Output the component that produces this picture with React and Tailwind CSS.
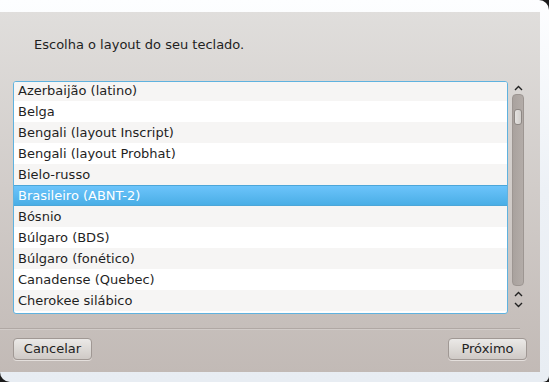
const layouts = [
  "Azerbaijão (latino)",
  "Belga",
  "Bengali (layout Inscript)",
  "Bengali (layout Probhat)",
  "Bielo-russo",
  "Brasileiro (ABNT-2)",
  "Bósnio",
  "Búlgaro (BDS)",
  "Búlgaro (fonético)",
  "Canadense (Quebec)",
  "Cherokee silábico",
];

function Arrow({ down }) {
  return (
    <svg width="9" height="6" viewBox="0 0 9 6" className="block">
      <path
        d={down ? "M1 1 L4.5 4.5 L8 1" : "M1 5 L4.5 1.5 L8 5"}
        fill="none"
        stroke="#222"
        strokeWidth="1.4"
      />
    </svg>
  );
}

export default function App() {
  const selected = "Brasileiro (ABNT-2)";

  return (
    <div
      className="w-[549px] h-[382px] bg-[#1c1c1c] overflow-hidden"
      style={{ fontFamily: '"DejaVu Sans", sans-serif' }}
    >
      <div className="w-full h-full rounded-tr-[10px] rounded-br-[6px] rounded-bl-[10px] bg-gradient-to-b from-[#fdfeff] via-[#edf1f6] to-[#e8edf3] pt-[12px] pr-[9px] pb-[10px]">
        <div className="w-full h-full bg-gradient-to-b from-[#e0dedc] to-[#c2bab6] flex flex-col text-[13px] text-[#1f1f1f]">
          <div className="pl-[34px] pt-[25px] h-[69px] leading-[16px]">Escolha o layout do seu teclado.</div>

          <div className="flex pl-[13px] pr-[14px]">
            <div className="w-[497px] h-[233px] border border-[#5fb2df] rounded-[3px] bg-white overflow-hidden">
              <div className="-mt-[2px]">
                {layouts.map((name, i) =>
                  name === selected ? (
                    <div
                      key={name}
                      className="h-[21px] leading-[19px] pl-[4px] text-white border-y border-[#4ca6d8] bg-gradient-to-b from-[#6cc4fb] to-[#49aee6]"
                    >
                      {name}
                    </div>
                  ) : (
                    <div
                      key={name}
                      className={`h-[21px] leading-[21px] pl-[4px] ${i % 2 === 0 ? "bg-[#f6f5f4]" : "bg-white"}`}
                    >
                      {name}
                    </div>
                  )
                )}
              </div>
            </div>

            <div className="w-[16px] ml-[2px] flex flex-col items-center pt-[4px]">
              <Arrow />
              <div className="mt-[3px] w-[12px] h-[192px] rounded-[4px] bg-gradient-to-r from-[#a9a29e] to-[#b3aca8] border border-[#9d9692] pt-[14px] px-[1px]">
                <div className="h-[16px] rounded-[3px] bg-gradient-to-r from-[#e4e2e0] to-[#d2cfcc] border border-[#8e8884]" />
              </div>
              <div className="mt-[5px]">
                <Arrow />
              </div>
              <div className="mt-[5px]">
                <Arrow down />
              </div>
            </div>
          </div>

          <div className="mt-[14px] h-px bg-[#b0a8a4] mr-[20px]" />
          <div className="h-px bg-[#d2ccc9] mr-[20px]" />

          <div className="flex justify-between pl-[13px] pr-[13px] mt-[8px]">
            <button className="w-[79px] h-[22px] rounded-[4px] border border-[#a09894] bg-gradient-to-b from-[#ebe9e7] to-[#cfcac6] text-[13px] text-[#222] leading-[20px] shadow-[0_1px_0_#e4dfdc]">
              Cancelar
            </button>
            <button className="w-[79px] h-[22px] rounded-[4px] border border-[#a09894] bg-gradient-to-b from-[#ebe9e7] to-[#cfcac6] text-[13px] text-[#222] leading-[20px] shadow-[0_1px_0_#e4dfdc]">
              Próximo
            </button>
          </div>
        </div>
      </div>
    </div>
  );
}
